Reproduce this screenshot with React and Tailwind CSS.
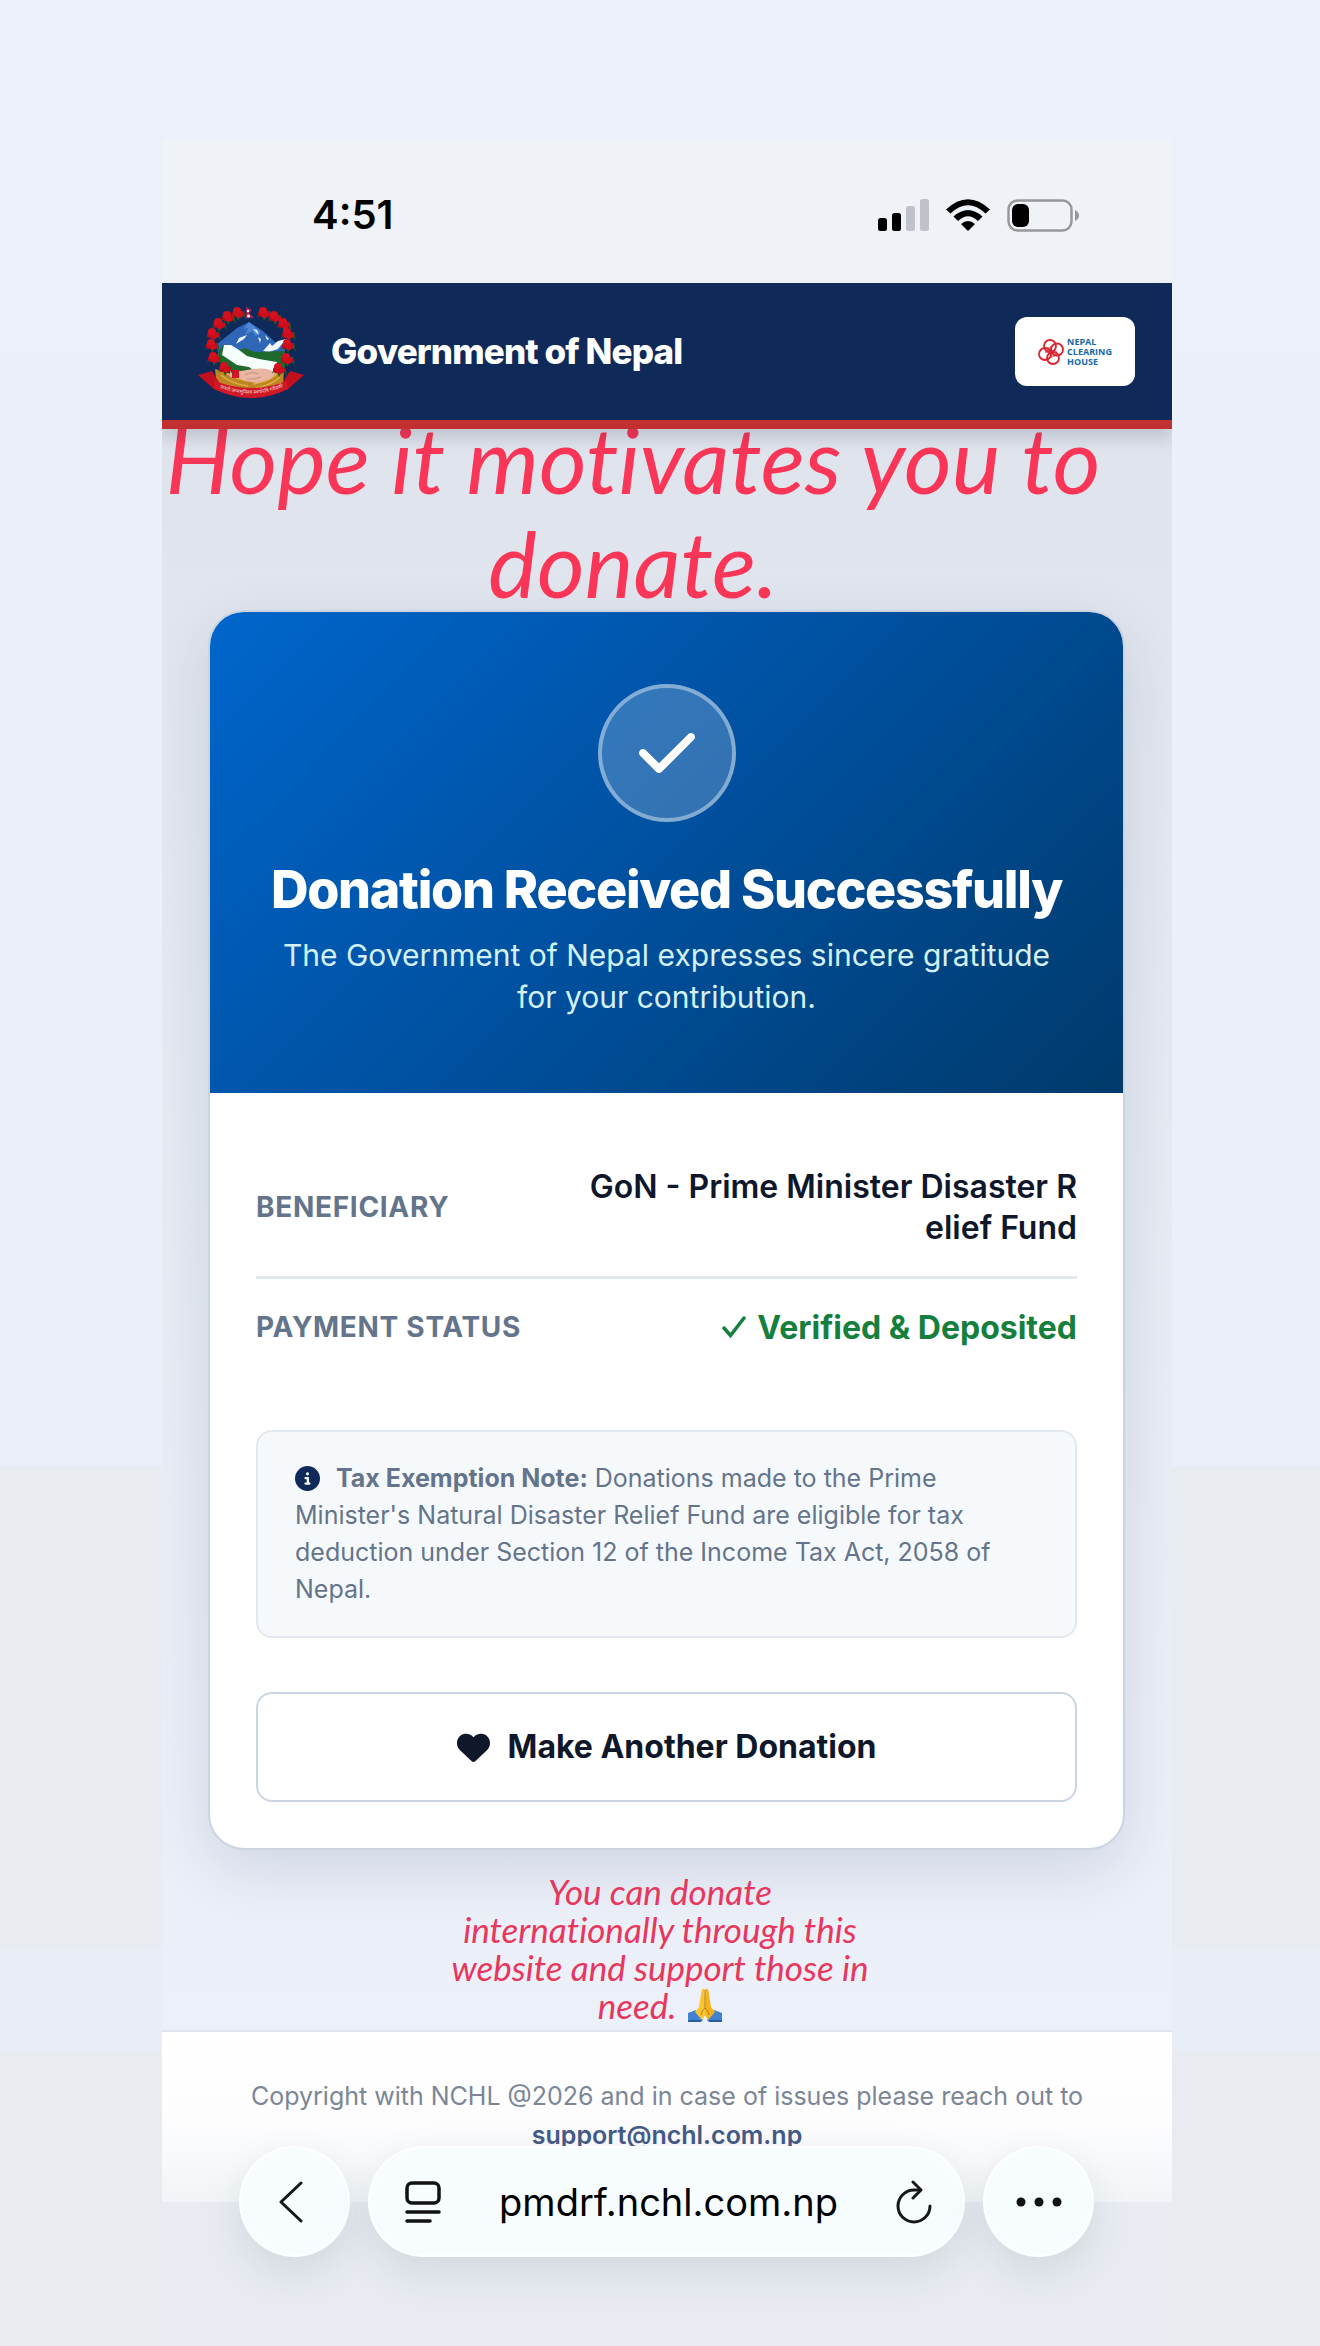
import { FaCheck, FaCircleInfo, FaHeart } from "react-icons/fa6";

// rhododendron positions around the emblem
const flowers = [
  [59, 22], [49, 26], [40, 33], [34, 43], [33, 54], [35, 67], [46, 77],
  [85, 22], [96, 26], [105, 33], [109, 43], [109, 54], [108, 68], [100, 78],
];

function Emblem() {
  return (
    <svg viewBox="18 14 110 94" className="h-[94px] w-[110px] shrink-0" role="img" aria-label="Emblem of Nepal">
      <path d="M37 54 L58 37 L70 31 L84 40 L96 51 L107 51 L104 76 L72 82 L44 78 Z" fill="#2f66b8" />
      <path d="M70 31 L64 38 L69 37 L66 44 L73 40 L77 45 L82 41 Z" fill="#4f86d6" />
      <path d="M60 47 l8 -3 l-3 4 l-8 5 z M74 38 l4 1 l2 5 z M79 46 l3 2 l-1 4 z M86 44 l4 4 l-2 1 z M84 60 l7 -8 l2 3 l6 -5 l8 -2 l-8 10 l-9 3 z" fill="#edf7fb" />
      <path d="M36 67 L44 54 L60 59 L66 57 L76 61 L106 60 L106 78 L92 82 L52 82 Z" fill="#1d6a2c" />
      <path d="M45 54 L52 54 L60 59 L68 65 L80 68 L98 71 L96 82 L78 82 L70 76 L58 74 L43 64 Z" fill="#f5fffb" />
      <path d="M36 78 L60 85 L80 84 L105 77 L104 98 L72 104 L38 97 Z" fill="#bd8524" />
      <path d="M42 84 q11 9 27 11 M47 82 q12 7 22 7 M98 83 q-9 8 -24 10 M101 86 q-8 8 -24 11" stroke="#e0b045" strokeWidth="1.5" fill="none" />
      <path d="M51 80 L62 80 L74 78 Q90 76 97 82 L91 88 L78 92 L66 90 L60 87 L51 86 Z" fill="#e9b6a4" />
      <path d="M66 84 q7 -4 13 -1 M68 88 q8 1 14 -2" stroke="#c98d7c" strokeWidth="1" fill="none" />
      <path d="M53 79 h7 v8 h-7 z" fill="#d41224" />
      {flowers.map(([x, y]) => (
        <g key={`${x}-${y}`}>
          <path d={`M${x - 7} ${y + 5} l4 -5 l3 8 l4 -7 l4 6 l-2 -9 h-11 z`} fill="#215e22" />
          <circle cx={x - 3} cy={y + 1} r="3" fill="#b80a1a" />
          <circle cx={x + 3} cy={y + 1} r="3" fill="#c60b1c" />
          <circle cx={x - 1} cy={y - 2} r="4" fill="#d5101f" />
          <circle cx={x + 1} cy={y + 2} r="3" fill="#cc0e1d" />
        </g>
      ))}
      <path d="M67 16 L73 19 L70 22 L75 27 H67 Z" fill="#d3163c" stroke="#39378b" strokeWidth="0.6" />
      <circle cx="69" cy="20" r="1.2" fill="#fff" />
      <circle cx="69.5" cy="25" r="1.5" fill="#fff" />
      <path d="M19 84 L33 80 L40 91 L36 99 Z M125 84 L111 80 L104 91 L108 99 Z" fill="#c3101f" />
      <path d="M36 90 Q72 104 108 90 L109 98 Q72 116 35 98 Z" fill="#d01826" />
      <path id="motto" d="M38 96 Q72 110 107 95" fill="none" />
      <text fontSize="5" fill="#f3dada" fontFamily="Noto Sans, sans-serif" textAnchor="middle">
        <textPath href="#motto" startOffset="50%">जननी जन्मभूमिश्च स्वर्गादपि गरीयसी</textPath>
      </text>
    </svg>
  );
}

function ClearingHouseLogo() {
  return (
    <div className="flex h-[69px] w-[120px] shrink-0 items-center justify-center gap-[3px] rounded-xl bg-white">
      <svg viewBox="0 0 26 26" className="size-[26px]" fill="none" stroke="#dc2430" aria-hidden="true">
        <circle cx="12" cy="7" r="6" strokeWidth="1.8" />
        <circle cx="19" cy="10.5" r="6" strokeWidth="1.8" />
        <circle cx="15" cy="19" r="6" strokeWidth="1.8" />
        <circle cx="7" cy="15" r="6" strokeWidth="1.8" />
        <path d="M13 7 v12 M7 13 h12 M9 9 h3 M17 17 h-3" strokeWidth="1.2" />
      </svg>
      <div className="font-['Open_Sans',sans-serif] text-[9px] leading-[10px] font-bold text-[#1668a8]">
        NEPAL
        <br />
        CLEARING
        <br />
        HOUSE
      </div>
    </div>
  );
}

function StatusBar() {
  return (
    <div className="flex h-36 items-center justify-between bg-[#eff2f7] pt-2 pr-[93px] pl-[150px]">
      <span className="text-[40px] leading-none font-semibold text-black">4:51</span>
      <div className="flex items-center gap-[17px]">
        <svg viewBox="0 0 51 32" className="h-8 w-[51px]" aria-hidden="true">
          <rect x="0" y="19" width="9" height="13" rx="2.5" fill="#000" />
          <rect x="14" y="14" width="9" height="18" rx="2.5" fill="#000" />
          <rect x="28" y="7" width="9" height="25" rx="2.5" fill="#bfc2c9" />
          <rect x="42" y="0" width="9" height="32" rx="2.5" fill="#bfc2c9" />
        </svg>
        <svg viewBox="0 0 44 32" className="h-8 w-11" aria-hidden="true">
          <path d="M0 10.5 Q22 -10 44 10.5 L39.5 14.5 Q22 -2 4.5 14.5 Z" />
          <path d="M7.5 17.5 Q22 4.5 36.5 17.5 L32 22 Q22 12.5 12 22 Z" />
          <path d="M15 25 Q22 19 29 25 L22 32 Z" />
        </svg>
        <svg viewBox="0 0 72 33" className="h-[33px] w-[72px]" aria-hidden="true">
          <rect x="1.5" y="1.5" width="63" height="30" rx="9" fill="none" stroke="#96989c" strokeWidth="2.5" />
          <rect x="5" y="5" width="17" height="23" rx="6" />
          <path d="M68 11 Q72 13 72 16.5 Q72 20 68 22 Z" fill="#96989c" />
        </svg>
      </div>
    </div>
  );
}

function FoldedHands() {
  return (
    <svg viewBox="0 0 34 34" className="ml-3 inline-block size-[34px]" role="img" aria-label="Folded hands">
      <path d="M0 25 L8 22 L15 32 L13 34 H0 Z M34 25 L26 22 L19 32 L21 34 H34 Z" fill="#3f83d2" />
      <path d="M1 32 h12 v2 h-13 z M21 32 h13 v2 h-13 z" fill="#2a5f9f" />
      <path d="M16.5 1 Q14 0 13.5 3 L11 19 L7 24 L14 32 L17 27 Z" fill="#fbc52f" />
      <path d="M17.5 1 Q20 0 20.5 3 L23 19 L27 24 L20 32 L17 27 Z" fill="#f5b41f" />
      <path d="M17 2 V20 M17 20 Q14 22 13 27 M17 20 Q20 22 21 27" stroke="#b97a12" strokeWidth="1" fill="none" />
    </svg>
  );
}

function BrowserBar() {
  const pill =
    "flex h-[111px] items-center rounded-full border-2 border-white/80 bg-[#f7fdfe] shadow-[0_16px_40px_rgba(30,41,59,0.10)]";

  return (
    <nav className="relative -mt-14 flex gap-[18px] pr-[78px] pl-[77px]">
      <button type="button" aria-label="Back" className={`${pill} w-[111px] shrink-0 justify-center pr-2`}>
        <svg viewBox="0 0 26 42" className="h-[42px] w-[26px]" fill="none" stroke="#161616" strokeWidth="3" strokeLinecap="round" strokeLinejoin="round">
          <path d="M23 2 L3 21 L23 40" />
        </svg>
      </button>
      <div className={`${pill} min-w-0 flex-1 justify-between pr-[30px] pl-[34px]`}>
        <button type="button" aria-label="Page menu">
          <svg viewBox="0 0 38 44" className="h-11 w-[38px]" fill="none" stroke="#111" strokeWidth="3.5" strokeLinecap="round">
            <rect x="3" y="3" width="32" height="20" rx="5" />
            <path d="M3 32 H35 M3 41 H26" />
          </svg>
        </button>
        <span className="text-[38px] leading-none text-black">pmdrf.nchl.com.np</span>
        <button type="button" aria-label="Reload">
          <svg viewBox="0 0 38 44" className="h-11 w-[38px]" fill="none" stroke="#161616" strokeWidth="3" strokeLinecap="round" strokeLinejoin="round">
            <path d="M25 10 H19 A16 16 0 1 0 35 26" />
            <path d="M18 2 L26 10 L18 18" />
          </svg>
        </button>
      </div>
      <button type="button" aria-label="More" className={`${pill} w-[111px] shrink-0 justify-center`}>
        <svg viewBox="0 0 46 10" className="h-[10px] w-[46px]" fill="#111">
          <circle cx="5" cy="5" r="4.5" />
          <circle cx="23" cy="5" r="4.5" />
          <circle cx="41" cy="5" r="4.5" />
        </svg>
      </button>
    </nav>
  );
}

export default function App() {
  return (
    <div className="min-h-screen bg-[linear-gradient(#ecf0fa_0,#ebeff9_1466px,#e8ecf1_1466px,#e8ecf1_1950px,#e9edf6_1950px,#e9edf6_2051px,#e8ecf1_2051px)] pt-[139px] pr-[148px] pl-[162px] font-['Inter',sans-serif]">
      <div className="overflow-hidden">
        <StatusBar />

        <header className="relative z-10 flex items-center justify-between border-b-[9px] border-[#c12f30] bg-[#0f2a59] pr-[37px] pl-[35px] shadow-[0_10px_14px_rgba(15,23,42,0.14)]">
          <div className="flex h-[137px] items-center gap-6">
            <Emblem />
            <h1 className="text-[35px] leading-none font-extrabold tracking-tight text-white">Government of Nepal</h1>
          </div>
          <ClearingHouseLogo />
        </header>

        <main className="bg-linear-to-b from-[#dfe3ec] via-[#e7ebf2] to-[#ecf0f9] pb-1.5">
          <p className="relative -mt-[22px] pr-[68px] text-center font-['Lato',sans-serif] text-[92px] leading-[104px] whitespace-nowrap text-[#f93657] italic [font-variant-ligatures:none]">
            Hope it motivates you to
            <br />
            donate.
          </p>

          <section className="-mt-[5px] mr-[47px] ml-[46px] overflow-hidden rounded-[36px] border-2 border-[#cbd5e1] bg-white shadow-[0_20px_60px_rgba(15,42,89,0.12)]">
            <div className="bg-linear-135 from-[#0066cc] via-[#00509f] to-[#003a6b] px-10 pt-[72px] pb-[75px] text-center">
              <div className="mx-auto flex size-[138px] items-center justify-center rounded-full border-4 border-white/40 bg-white/20">
                <FaCheck className="size-16 text-white" />
              </div>
              <h2 className="mt-[38px] text-[52px] leading-[60px] font-extrabold tracking-tight text-white">
                Donation Received Successfully
              </h2>
              <p className="mt-[14px] text-[30px] leading-[42px] text-[#d3f1f7]">
                The Government of Nepal expresses sincere gratitude
                <br />
                for your contribution.
              </p>
            </div>

            <div className="px-[46px] pt-11 pb-[46px]">
              <dl>
                <div className="flex items-center justify-between border-b-[3px] border-[#e2e8f0] pt-[29px] pb-7">
                  <dt className="text-[28px] font-bold tracking-wide text-[#64748b]">BENEFICIARY</dt>
                  <dd className="text-right text-[32px] leading-[41px] font-semibold text-[#0f172a]">
                    GoN - Prime Minister Disaster R
                    <br />
                    elief Fund
                  </dd>
                </div>
                <div className="flex items-center justify-between pt-[27px]">
                  <dt className="text-[28px] font-bold tracking-wide text-[#64748b]">PAYMENT STATUS</dt>
                  <dd className="flex items-center gap-[11px] text-[32px] leading-[41px] font-bold text-[#15803d]">
                    <svg viewBox="0 0 24 22" className="h-[22px] w-6" fill="none" stroke="currentColor" strokeWidth="3.5" strokeLinecap="round" aria-hidden="true">
                      <path d="M2 12 L8.5 19.5 L22 2" />
                    </svg>
                    Verified &amp; Deposited
                  </dd>
                </div>
              </dl>

              <div className="mt-[82px] rounded-2xl border-2 border-[#e2e8f0] bg-[#f6f9fb] px-[37px] py-7 text-[25px] leading-[37px] text-[#64748b]">
                <FaCircleInfo className="mr-4 mb-1 inline size-[25px] text-[#0f2a59]" />
                <strong className="font-bold">Tax Exemption Note:</strong> Donations made to the Prime Minister's Natural
                Disaster Relief Fund are eligible for tax deduction under Section 12 of the Income Tax Act, 2058 of Nepal.
              </div>

              <button
                type="button"
                className="mt-[54px] flex h-[110px] w-full items-center justify-center gap-[18px] rounded-2xl border-2 border-[#cbd5e1] bg-white text-[32px] font-bold text-[#0f172a]"
              >
                <FaHeart className="size-[33px]" />
                Make Another Donation
              </button>
            </div>
          </section>

          <p className="mt-[22px] pr-[14px] text-center font-['Lato',sans-serif] text-[35px] leading-[38px] text-[#e8365d] italic [font-variant-ligatures:none]">
            You can donate
            <br />
            internationally through this
            <br />
            website and support those in
            <br />
            <span className="inline-flex h-[38px] items-center">
              need. <FoldedHands />
            </span>
          </p>
        </main>

        <footer className="border-t-2 border-[#e1e6ee] bg-linear-to-b from-white via-[#fdfdfe] to-[#f1f5f7] pt-[45px] pb-[47px] text-center text-[25px] leading-[39px] text-[#7b8696]">
          <p>Copyright with NCHL @2026 and in case of issues please reach out to</p>
          <a href="mailto:support@nchl.com.np" className="font-semibold text-[#445a87]">
            support@nchl.com.np
          </a>
        </footer>

        <div className="flow-root bg-[#e8ecf2] pb-[89px]">
          <BrowserBar />
        </div>
      </div>
    </div>
  );
}
